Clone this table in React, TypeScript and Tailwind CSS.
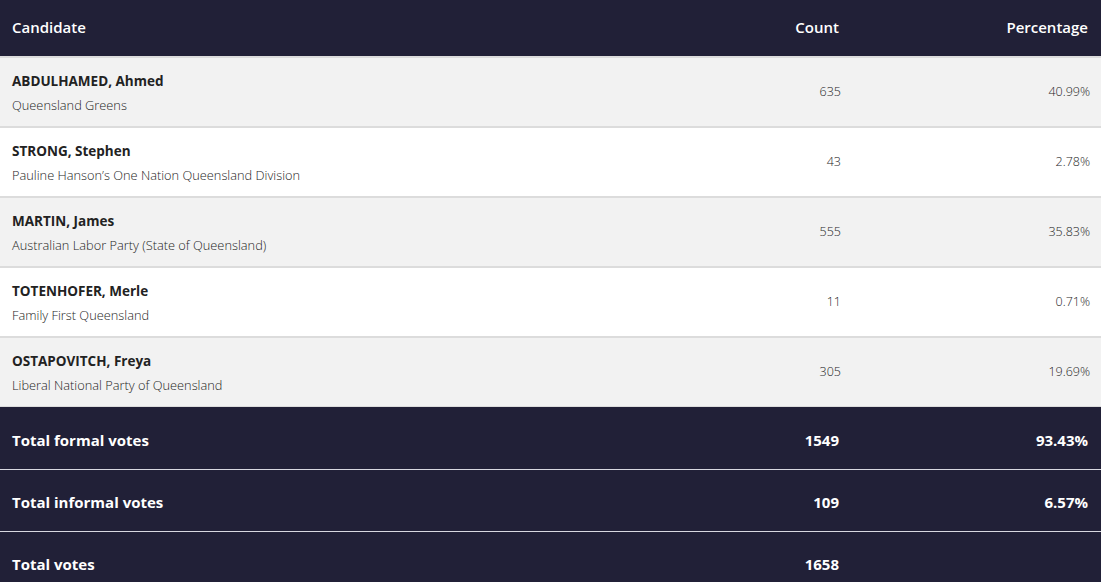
const rows = [
  { name: 'ABDULHAMED, Ahmed', party: 'Queensland Greens', count: '635', pct: '40.99%' },
  { name: 'STRONG, Stephen', party: 'Pauline Hanson\u2019s One Nation Queensland Division', count: '43', pct: '2.78%' },
  { name: 'MARTIN, James', party: 'Australian Labor Party (State of Queensland)', count: '555', pct: '35.83%' },
  { name: 'TOTENHOFER, Merle', party: 'Family First Queensland', count: '11', pct: '0.71%' },
  { name: 'OSTAPOVITCH, Freya', party: 'Liberal National Party of Queensland', count: '305', pct: '19.69%' },
]

const totals = [
  { label: 'Total formal votes', count: '1549', pct: '93.43%' },
  { label: 'Total informal votes', count: '109', pct: '6.57%' },
  { label: 'Total votes', count: '1658', pct: '' },
]

export default function App() {
  return (
    <div className="w-[1101px] h-[582px] overflow-hidden bg-white text-[#222] font-['Open_Sans',sans-serif]">
      {/* header */}
      <div className="grid grid-cols-[1fr_250px_250px] h-[56px] items-center pb-[2px] bg-[#212037] text-white text-[15px] font-semibold">
        <div className="pl-3">Candidate</div>
        <div className="text-right pr-3">Count</div>
        <div className="text-right pr-[13px]">Percentage</div>
      </div>

      {rows.map((r, i) => (
        <div
          key={r.name}
          className={
            'grid grid-cols-[1fr_250px_250px] h-[70px] items-center border-t-2 border-[#dcdcdc] ' +
            (i % 2 === 0 ? 'bg-[#f2f2f2]' : 'bg-white')
          }
        >
          <div className="pl-3 pt-[2px]">
            <div className="text-[13.5px] font-bold leading-[20px]">{r.name}</div>
            <div className="text-[12.8px] font-light leading-[20px] mt-[4px] text-[#1e1e1e]">{r.party}</div>
          </div>
          <div className="text-right pr-[10px] text-[12.5px] font-light text-[#1e1e1e]">{r.count}</div>
          <div className="text-right pr-[11px] text-[12.5px] font-light text-[#1e1e1e]">{r.pct}</div>
        </div>
      ))}

      <div className="bg-[#212037] text-white text-[15px] font-bold border-t border-[#dcdcdc]">
        {totals.map((t, i) => (
          <div
            key={t.label}
            className={
              'grid grid-cols-[1fr_250px_250px] h-[62px] items-center pt-[4px] ' +
              (i > 0 ? 'border-t border-[#d8d8e0]' : '')
            }
          >
            <div className="pl-3">{t.label}</div>
            <div className="text-right pr-3">{t.count}</div>
            <div className="text-right pr-[13px]">{t.pct}</div>
          </div>
        ))}
      </div>
    </div>
  )
}
